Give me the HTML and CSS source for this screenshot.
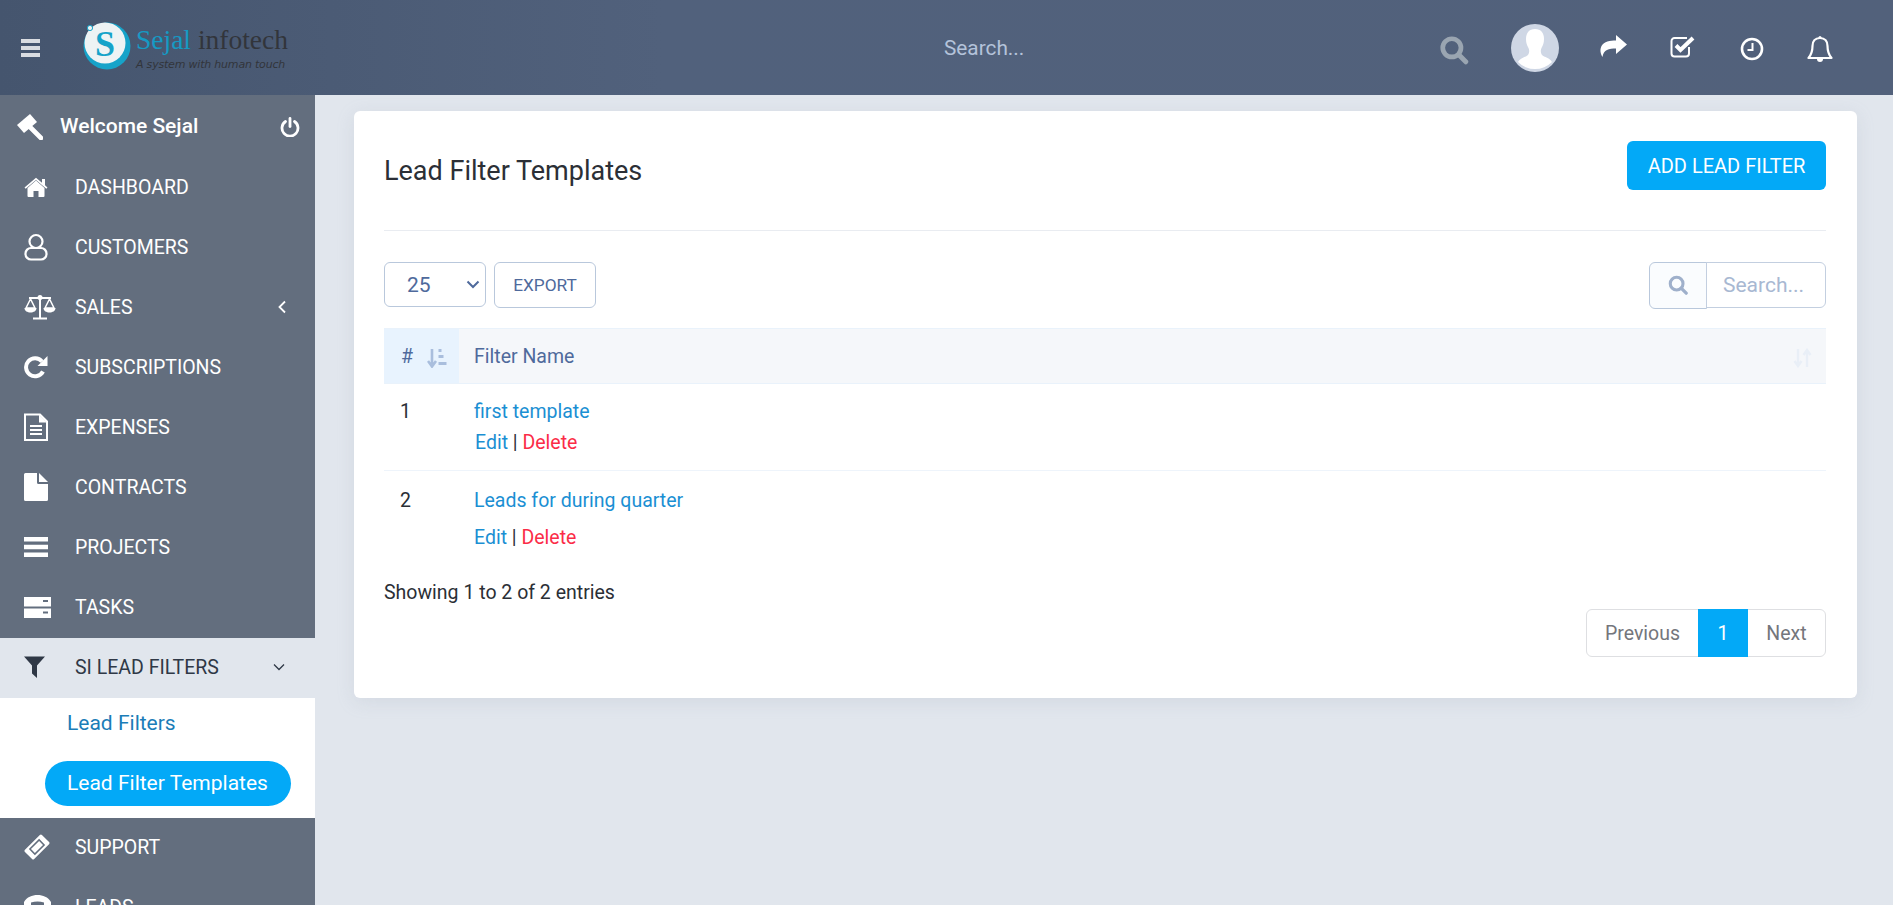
FILE: index.html
```html
<!DOCTYPE html>
<html lang="en">
<head>
<meta charset="utf-8">
<title>Lead Filter Templates</title>
<link rel="stylesheet" href="styles.css">
</head>
<body>
<header class="topbar">
  <div class="burger"><span></span><span></span><span></span></div>
  <div class="logo">
    <svg class="logo-mark" viewBox="0 0 48 48" width="48" height="48">
      <circle cx="24" cy="24" r="23.5" fill="#16a3c9"/>
      <circle cx="22" cy="21" r="20.5" fill="#eef3f4"/>
      <circle cx="7" cy="6" r="2.6" fill="#eef3f4" stroke="#16a3c9" stroke-width="1"/>
      <text x="22" y="34" class="logo-s">S</text>
    </svg>
    <div class="logo-text">
      <div class="logo-name"><span class="logo-blue">Sejal</span> infotech</div>
      <div class="logo-tag">A system with human touch</div>
    </div>
  </div>
  <div class="top-search">Search...</div>
  <svg class="ico top-find" viewBox="0 0 28 28" width="30" height="30"><circle cx="12" cy="12" r="8.5" fill="none" stroke="#9aa5b1" stroke-width="4.4"/><path d="M18.5 18.5L25 25" stroke="#9aa5b1" stroke-width="4.6" stroke-linecap="round"/></svg>
  <svg class="avatar" viewBox="0 0 48 48" width="48" height="48"><circle cx="24" cy="24" r="24" fill="#cfd7e5"/><path d="M24 5c6 0 9 4 9 10 0 4-1 6-2.500 9-1 2-1 5 .5 7 2 2 8 3 10 7a24 24 0 0 1-34 0c2-4 8-5 10-7 1.500-2 1.500-5 .5-7-1.500-3-2.500-5-2.500-9 0-6 3-10 9-10z" fill="#fff"/></svg>
  <svg class="top-ico ti-share" viewBox="0 0 28 24" width="28" height="24"><path d="M16 1l11 9.500L16 20v-5.500C9 14.500 3.500 15.500 2.500 23 0 19 0 15 1.500 12 4 7.500 10 6.500 16 6.500z" fill="#fff"/></svg>
  <svg class="top-ico ti-check" viewBox="0 0 26 22" width="26" height="22"><path d="M19 11v6.500a3 3 0 0 1-3 3H4.500a3 3 0 0 1-3-3V5a3 3 0 0 1 3-3H17" fill="none" stroke="#fff" stroke-width="2"/><path d="M6 9.500l4.500 4.500L23 2" fill="none" stroke="#fff" stroke-width="4"/></svg>
  <svg class="top-ico ti-clock" viewBox="0 0 24 24" width="24" height="24"><circle cx="12" cy="12" r="10" fill="none" stroke="#fff" stroke-width="2.600"/><path d="M12.500 6v7H7.500" fill="none" stroke="#fff" stroke-width="2"/></svg>
  <svg class="top-ico ti-bell" viewBox="0 0 26 28" width="26" height="28"><path d="M13 3c-5 0-7.500 3.500-7.500 8 0 6-1.500 9-4 12h23c-2.500-3-4-6-4-12 0-4.500-2.500-8-7.500-8z" fill="none" stroke="#fff" stroke-width="2.200" stroke-linejoin="round"/><path d="M10 24a3 3 0 0 0 6 0z" fill="#fff"/><circle cx="13" cy="2.500" r="1.500" fill="#fff"/></svg>
</header>

<div class="shell">
  <aside class="sidebar">
    <div class="welcome">
      <svg class="gavel" viewBox="0 0 26 26" width="26" height="26"><path d="M0 11L13 0l7 8-13 11z" fill="#fff"/><path d="M12 12l12 12" stroke="#fff" stroke-width="4.600" stroke-linecap="round"/></svg>
      <span class="welcome-text">Welcome Sejal</span>
      <svg class="power" viewBox="0 0 20 20" width="20" height="20"><path d="M5.500 4.500a8 8 0 1 0 9 0" fill="none" stroke="#fff" stroke-width="2.800" stroke-linecap="round"/><path d="M10 1.500v8" stroke="#fff" stroke-width="2.800" stroke-linecap="round"/></svg>
    </div>
    <nav class="nav">
      <a class="nav-item"><span class="nav-ico"><svg viewBox="0 0 24 20" width="24" height="20"><path d="M12 3.500L3.500 11v8a1 1 0 0 0 1 1H9.500v-6h5v6h5a1 1 0 0 0 1-1v-8z" fill="#fff"/><path d="M.5 10.500L12 .8l6 5V2h3v6.300l2.500 2.200-1.200 1.300L12 3 1.700 11.800z" fill="#fff"/></svg></span>DASHBOARD</a>
      <a class="nav-item"><span class="nav-ico"><svg viewBox="0 0 24 28" width="24" height="28"><circle cx="12" cy="8.500" r="6.500" fill="none" stroke="#fff" stroke-width="2.200"/><rect x="1.500" y="15" width="21" height="11.500" rx="5.500" fill="none" stroke="#fff" stroke-width="2.200"/></svg></span>CUSTOMERS</a>
      <a class="nav-item"><span class="nav-ico"><svg viewBox="0 0 32 26" width="32" height="26"><path d="M5 4h22M16 2v22M9 24.500h14" stroke="#fff" stroke-width="2" fill="none"/><circle cx="16" cy="3.500" r="2.500" fill="#fff"/><path d="M6.500 5L2 14h9zM25.500 5L21 14h9z" fill="none" stroke="#fff" stroke-width="1.500"/><path d="M.5 14h12c0 3-3 4.500-6 4.500S.5 17 .5 14zM19.500 14h12c0 3-3 4.500-6 4.500s-6-1.500-6-4.500z" fill="#fff"/></svg></span>SALES<svg class="chev-left" viewBox="0 0 10 14" width="10" height="14"><path d="M8 1.500L2.500 7 8 12.500" fill="none" stroke="#fff" stroke-width="1.800"/></svg></a>
      <a class="nav-item"><span class="nav-ico"><svg viewBox="0 0 24 24" width="24" height="24"><path d="M19 16.500A9 9 0 1 1 18 6.500" fill="none" stroke="#fff" stroke-width="4"/><path d="M23.500 1v10h-10z" fill="#fff"/></svg></span>SUBSCRIPTIONS</a>
      <a class="nav-item"><span class="nav-ico"><svg viewBox="0 0 24 28" width="24" height="28"><path d="M1 1.500h15l7 7v18.500H1z" fill="none" stroke="#fff" stroke-width="2"/><path d="M15 1.500v8h8z" fill="#fff"/><path d="M6 13h12M6 17h12M6 21h12" stroke="#fff" stroke-width="2"/></svg></span>EXPENSES</a>
      <a class="nav-item"><span class="nav-ico"><svg viewBox="0 0 24 28" width="24" height="28"><path d="M0 1.500A1.500 1.500 0 0 1 1.500 0H13v9.500a1.500 1.500 0 0 0 1.500 1.500H24v15.500a1.500 1.500 0 0 1-1.500 1.500h-21A1.500 1.500 0 0 1 0 26.500z" fill="#fff"/><path d="M15 0l9 9h-9z" fill="#fff"/></svg></span>CONTRACTS</a>
      <a class="nav-item"><span class="nav-ico"><svg viewBox="0 0 24 20" width="24" height="20"><path d="M0 0h24v4.500H0zM0 7.800h24v4.500H0zM0 15.500h24V20H0z" fill="#fff"/></svg></span>PROJECTS</a>
      <a class="nav-item"><span class="nav-ico"><svg viewBox="0 0 27 21" width="27" height="21"><path fill-rule="evenodd" d="M0 0h27v9.500H0zM19 3v2h5V3zM0 11.500h27V21H0zM19 14.500v2h5v-2z" fill="#fff"/></svg></span>TASKS</a>
      <a class="nav-item is-open"><span class="nav-ico"><svg viewBox="0 0 22 22" width="22" height="22"><path d="M0 .5h21L13 9.500V22l-5-4.500v-8z" fill="#2f3846"/></svg></span>SI LEAD FILTERS<svg class="chev-down" viewBox="0 0 12 8" width="12" height="8"><path d="M1 1.500l5 5 5-5" fill="none" stroke="#2f3846" stroke-width="1.300"/></svg></a>
      <div class="subnav">
        <a class="sub-item">Lead Filters</a>
        <a class="sub-item is-current">Lead Filter Templates</a>
      </div>
      <a class="nav-item"><span class="nav-ico"><svg viewBox="0 0 26 26" width="26" height="26"><g transform="rotate(-45 13 13)"><rect x="1" y="6.500" width="24" height="13" rx="1.500" fill="#fff"/><rect x="6.500" y="9.500" width="13" height="7" fill="none" stroke="#636e7e" stroke-width="1.500"/></g></svg></span>SUPPORT</a>
      <a class="nav-item"><span class="nav-ico"><svg viewBox="0 0 27 25" width="27" height="25"><path d="M0 7C3 2 8 0 13.500 0S24 2 27 7v4h-7V7.500c-4-1.500-9-1.500-13 0V11H0zM6 13h15l4 12H2z" fill="#fff"/></svg></span>LEADS</a>
    </nav>
  </aside>

  <main class="content">
    <section class="card">
      <div class="card-head">
        <h1 class="card-title">Lead Filter Templates</h1>
        <a class="btn-add">ADD LEAD FILTER</a>
      </div>
      <div class="tools">
        <div class="len-select">25<svg viewBox="0 0 14 9" width="14" height="9"><path d="M1.500 1.500L7 7l5.500-5.500" fill="none" stroke="#4f6a9c" stroke-width="2"/></svg></div>
        <a class="btn-export">EXPORT</a>
        <div class="find">
          <span class="find-addon"><svg viewBox="0 0 22 22" width="20" height="20"><circle cx="9.500" cy="9.500" r="7" fill="none" stroke="#9fb0cb" stroke-width="3.400"/><path d="M14.500 14.500L20 20" stroke="#9fb0cb" stroke-width="3.600" stroke-linecap="round"/></svg></span>
          <span class="find-input">Search...</span>
        </div>
      </div>
      <table class="data">
        <thead>
          <tr>
            <th class="col-id"><div class="th-id"># <svg class="sort-ico" viewBox="0 0 20 20" width="20" height="20"><path d="M5 1v15M1 13l4 5.500L9 13" fill="none" stroke="#a9bedd" stroke-width="2.600"/><path d="M11.500 1h3v3h-3zM11.500 7h5v3h-5zM11.500 14h8v3h-8z" fill="#a9bedd"/></svg></div></th>
            <th class="col-name"><div class="th-name">Filter Name<svg class="sort-ico" viewBox="0 0 20 20" width="20" height="20"><path d="M5 1v15M1.500 13L5 18l3.500-5M14 19V4M10.500 7L14 2l3.500 5" fill="none" stroke="#e9eff7" stroke-width="2.400"/></svg></div></th>
          </tr>
        </thead>
        <tbody>
          <tr class="row-a">
            <td class="cell-id">1</td>
            <td class="cell-name"><a class="lnk">first template</a><div class="acts acts-a"><a class="lnk">Edit</a> | <a class="del">Delete</a></div></td>
          </tr>
          <tr class="row-b">
            <td class="cell-id">2</td>
            <td class="cell-name"><a class="lnk">Leads for during quarter</a><div class="acts acts-b"><a class="lnk">Edit</a> | <a class="del">Delete</a></div></td>
          </tr>
        </tbody>
      </table>
      <div class="info">Showing 1 to 2 of 2 entries</div>
      <div class="pager-wrap">
        <div class="pager"><a class="pg pg-prev">Previous</a><a class="pg pg-on">1</a><a class="pg pg-next">Next</a></div>
      </div>
    </section>
  </main>
</div>
</body>
</html>
```
FILE: styles.css
```css
* { box-sizing: border-box; }
html, body { margin: 0; height: 100%; overflow: hidden; }
body { font-family: Roboto, "Liberation Sans", sans-serif; font-size: 19.500px; color: #2b2f36; background: #e1e6ed; display: flex; flex-direction: column; }
a { text-decoration: none; }
svg { display: block; flex: none; }

.topbar { height: 95px; flex: none; display: flex; align-items: center; position: relative; background: linear-gradient(90deg, #45556e 0%, #51617c 35%, #52617b 100%); }
.burger { width: 19px; margin-left: 21px; display: flex; flex-direction: column; gap: 3px; }
.burger span { height: 4px; background: #d9dce1; }
.logo { margin-left: 43px; display: flex; align-items: flex-start; }
.logo-mark { margin-top: -2px; }
.logo-s { font: bold 36px "Liberation Serif", serif; fill: #16a3c9; text-anchor: middle; }
.logo-text { margin-left: 5px; }
.logo-name { font: 27.500px/30px "Liberation Serif", serif; color: #32353b; white-space: nowrap; margin-top: 1px; }
.logo-blue { color: #159ac4; }
.logo-tag { font: italic 11px/14px "DejaVu Sans", sans-serif; color: #32353b; white-space: nowrap; letter-spacing: -.2px; margin-top: 3px; }
.top-search { margin-left: 656px; width: 495px; font-size: 20.800px; color: #b4c3da; }
.top-find { margin-top: 4px; }
.avatar { margin-left: 42px; }
.top-ico { margin-top: 0; }
.ti-share { margin-left: 41px; margin-top: -4px; }
.ti-check { margin-left: 42px; margin-top: -2px; }
.ti-clock { margin-left: 44px; margin-top: 2px; }
.ti-bell { margin-left: 43px; margin-top: 2px; }

.shell { flex: 1; display: flex; min-height: 0; }
.sidebar { width: 315px; flex: none; background: #636e7e; }
.welcome { height: 63px; display: flex; align-items: center; padding: 0 12px 0 17px; }
.welcome-text { font-weight: 500; font-size: 21px; color: #fff; margin-left: 17px; flex: 1; margin-top: -1px; }
.power { margin-right: 3px; }
.nav { display: flex; flex-direction: column; }
.nav-item { height: 60px; flex: none; display: flex; align-items: center; padding: 0 0 2px 24px; font-size: 19.500px; color: #fff; }
.nav-ico { width: 51px; flex: none; display: flex; align-items: center; }
.chev-left { margin-left: auto; margin-right: 28px; }
.chev-down { margin-left: auto; margin-right: 30px; }
.nav-item.is-open { background: #e1e6ed; color: #2f3846; }
.subnav { background: #fff; height: 120px; padding-top: 3px; display: flex; flex-direction: column; }
.sub-item { font-size: 21px; height: 45px; margin: 0 24px 0 45px; padding: 0 0 2px 22px; display: flex; align-items: center; color: #1b7db8; border-radius: 23px; }
.sub-item + .sub-item { margin-top: 15px; }
.sub-item.is-current { background: #03a9f7; color: #fff; }

.content { flex: 1; padding: 16px 36px 0 39px; min-width: 0; }
.card { background: #fff; border-radius: 6px; box-shadow: 0 4px 18px rgba(150, 160, 180, .18); padding: 30px 31px 30px 30px; height: 587px; }
.card-head { display: flex; align-items: flex-start; justify-content: space-between; height: 90px; border-bottom: 1px solid #e9ecf1; }
.card-title { margin: 12px 0 0; font-size: 27px; font-weight: 400; line-height: 36px; color: #2b2f36; }
.btn-add { width: 199px; height: 49px; background: #03a9f7; color: #fff; border-radius: 6px; font-size: 20px; display: flex; align-items: center; justify-content: center; }
.tools { display: flex; align-items: flex-start; margin-top: 31px; }
.len-select { width: 102px; height: 45px; border: 1px solid #b9c8dc; border-radius: 6px; display: flex; align-items: center; justify-content: space-between; padding: 0 5px 0 22px; font-size: 21px; color: #4f6a9c; }
.btn-export { width: 102px; height: 46px; margin-left: 8px; border: 1px solid #b9c8dc; border-radius: 6px; display: flex; align-items: center; justify-content: center; font-size: 17.300px; color: #4f6a9c; }
.find { margin-left: auto; display: flex; }
.find-addon { width: 58px; height: 47px; border: 1px solid #b9c8dc; border-radius: 6px 0 0 6px; background: #fafcfe; display: flex; align-items: center; justify-content: center; padding-bottom: 2px; }
.find-input { width: 120px; height: 46px; margin-left: -1px; border: 1px solid #c3cfe0; border-radius: 0 6px 6px 0; padding: 0 0 0 16px; display: flex; align-items: center; font-size: 21px; color: #a8b8d2; }

.data { width: 100%; border-collapse: collapse; margin-top: 19px; }
.data th { height: 55px; padding: 0; font-weight: 400; text-align: left; color: #4f6a9c; border-top: 1px solid #e9f2fb; border-bottom: 1px solid #e9f2fb; }
.col-id { width: 75px; background: #e8f3fe; }
.col-name { background: #f5f7fa; }
.th-id { display: flex; align-items: center; padding-left: 17px; gap: 14px; }
.th-name { display: flex; align-items: center; justify-content: space-between; padding: 0 13px 0 15px; }
.sort-ico { margin-top: 4px; }
.data td { padding: 0; vertical-align: top; }
.cell-id { padding-left: 16px !important; padding-top: 17px !important; line-height: 22px; }
.cell-name { padding-left: 15px !important; padding-top: 17px !important; line-height: 22px; }
.row-b .cell-id, .row-b .cell-name { padding-top: 19px !important; }
.row-a { height: 87px; border-bottom: 1px solid #eef4fb; }
.row-b { height: 90px; }
.lnk { color: #1b8fd3; }
.del { color: #fb2c47; }
.acts { white-space: nowrap; }
.acts-a { margin-top: 9px; padding-left: 1px; }
.acts-b { margin-top: 15px; }
.info { margin-top: 21px; line-height: 22px; }
.pager-wrap { display: flex; justify-content: flex-end; margin-top: 5px; }
.pager { display: flex; height: 48px; border: 1px solid #dedfe2; border-radius: 6px; }
.pg { display: flex; align-items: center; justify-content: center; color: #74767c; padding-top: 1px; }
.pg-prev { width: 111px; }
.pg-on { width: 50px; background: #03a9f7; color: #fff; margin: -1px 0; }
.pg-next { width: 77px; }
```
